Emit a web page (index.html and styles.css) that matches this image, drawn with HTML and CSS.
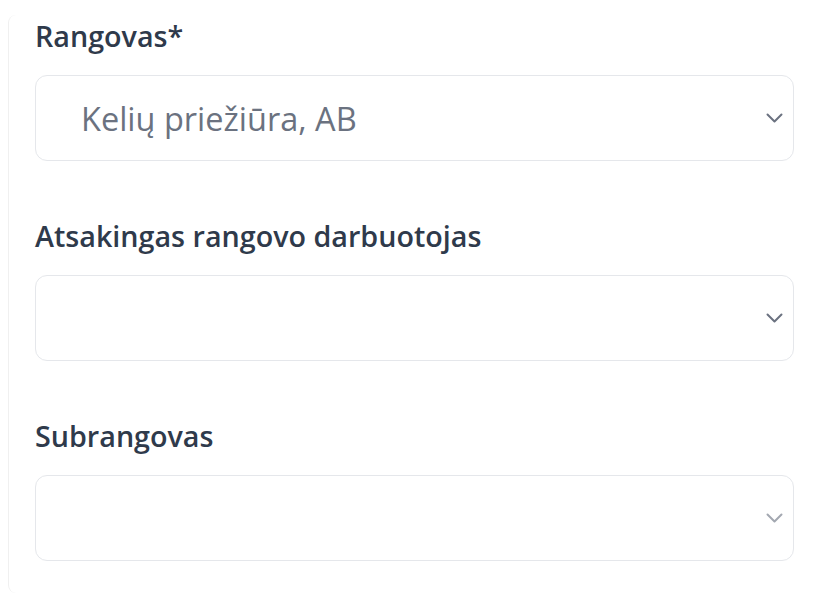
FILE: index.html
```html
<!DOCTYPE html>
<html lang="lt">
<head>
  <meta charset="UTF-8" />
  <meta name="viewport" content="width=device-width, initial-scale=1.0"/>
  <title>Rangovas</title>
  <link rel="stylesheet" href="styles.css">
</head>
<body>
  <div class="card">
    <div class="field">
      <label for="rangovas">Rangovas*</label>
      <div class="select-wrap">
        <select id="rangovas">
          <option>Kelių priežiūra, AB</option>
        </select>
        <svg class="chevron" viewBox="0 0 17 10" width="17" height="10">
          <path d="M1.5 1.5l7 7 7-7" fill="none" stroke="currentColor" stroke-width="2" stroke-linecap="round" stroke-linejoin="round"/>
        </svg>
      </div>
    </div>

    <div class="field">
      <label for="darbuotojas">Atsakingas rangovo darbuotojas</label>
      <div class="select-wrap">
        <select id="darbuotojas">
          <option></option>
        </select>
        <svg class="chevron" viewBox="0 0 17 10" width="17" height="10">
          <path d="M1.5 1.5l7 7 7-7" fill="none" stroke="currentColor" stroke-width="2" stroke-linecap="round" stroke-linejoin="round"/>
        </svg>
      </div>
    </div>

    <div class="field">
      <label for="subrangovas">Subrangovas</label>
      <div class="select-wrap disabled">
        <select id="subrangovas" disabled>
          <option></option>
        </select>
        <svg class="chevron" viewBox="0 0 17 10" width="17" height="10">
          <path d="M1.5 1.5l7 7 7-7" fill="none" stroke="currentColor" stroke-width="2" stroke-linecap="round" stroke-linejoin="round"/>
        </svg>
      </div>
    </div>
  </div>
</body>
</html>
```

FILE: styles.css
```css
body {
  margin: 0;
  font-family: "Open Sans", "Noto Sans", sans-serif;
  background-color: #ffffff;
  color: #374151;
}

.card {
  margin: 15px 0 0 8px;
  padding: 2px 30px 32px 26px;
  border-left: 1px solid #f0f0f0;
  border-radius: 8px 0 0 8px;
}

.field {
  margin-bottom: 56px;
}

.field:last-child {
  margin-bottom: 0;
}

label {
  display: block;
  font-size: 28.7px;
  line-height: 38px;
  font-weight: 600;
  color: #2f3a4b;
  margin-bottom: 20px;
}

.select-wrap {
  position: relative;
}

select {
  appearance: none;
  -webkit-appearance: none;
  width: 100%;
  height: 86px;
  padding: 0 50px 0 45px;
  border: 1px solid #e5e7eb;
  border-radius: 12px;
  background-color: #fff;
  font-family: inherit;
  font-size: 32.5px;
  color: #6b7280;
  outline: none;
}

select:disabled {
  opacity: 1;
}

.chevron {
  position: absolute;
  right: 11px;
  top: 38px;
  color: #6b7280;
  pointer-events: none;
}

.disabled .chevron {
  color: #a3a8b1;
}
```
